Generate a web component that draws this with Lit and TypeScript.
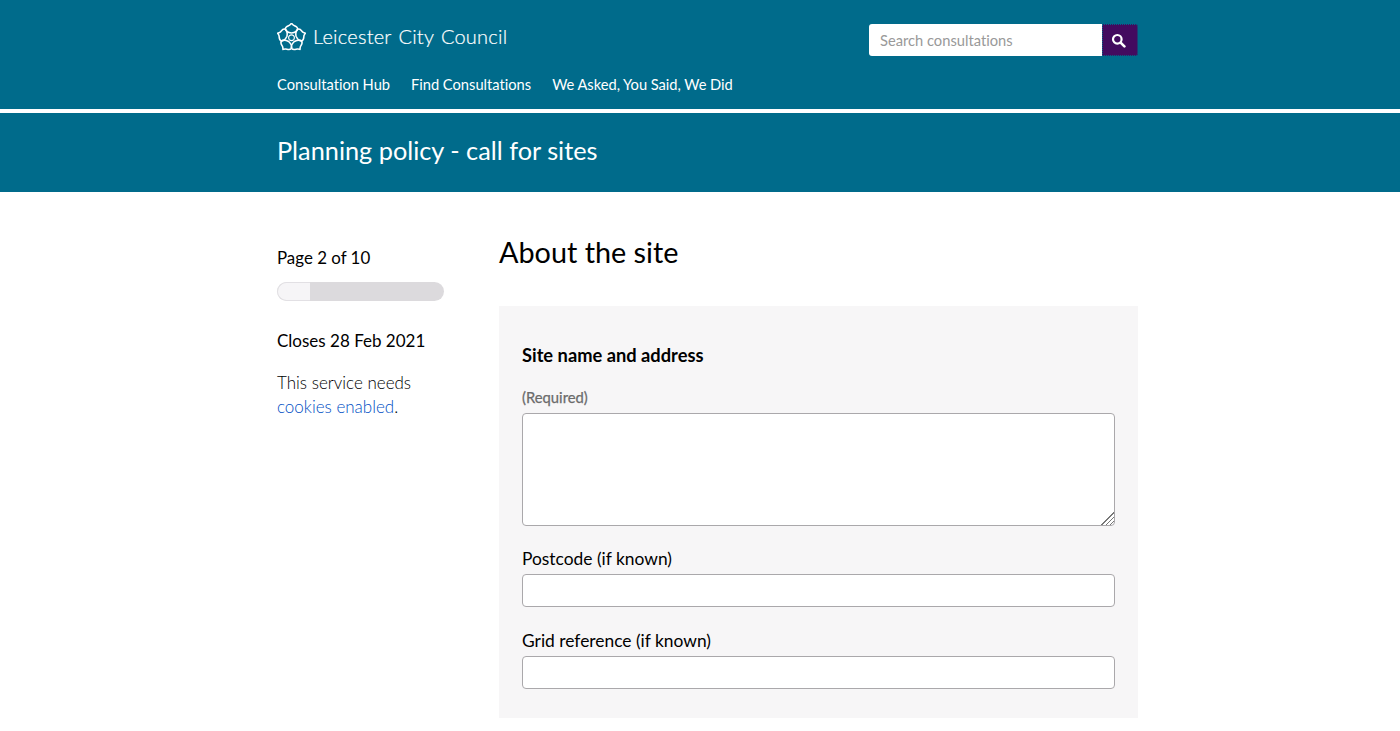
import {LitElement, html, css, svg} from 'lit';
import {customElement} from 'lit/decorators.js';

const petal = 'M0 -4.6 C-2 -4.9 -5.6 -5.6 -5.9 -8.6 C-5.9 -11 -2.8 -11.4 -1.8 -12.1 C-1.1 -12.6 -0.5 -13.4 0 -14 C0.5 -13.4 1.1 -12.6 1.8 -12.1 C2.8 -11.4 5.9 -11 5.9 -8.6 C5.6 -5.6 2 -4.9 0 -4.6 Z';

@customElement('app-root')
export class AppRoot extends LitElement {
  static styles = css`
    :host {
      display: block;
      font-family: Lato, 'Open Sans', sans-serif;
      font-variant-ligatures: none;
      color: #000;
      background: #fff;
      height: 731px;
      overflow: hidden;
    }

    .wrap {
      width: 861px;
      margin-left: 277px;
    }

    header {
      background: #006b8b;
      height: 109px;
      box-sizing: border-box;
      padding-top: 23px;
    }

    .top {
      display: flex;
      justify-content: space-between;
      align-items: flex-start;
    }

    .logo {
      display: flex;
      align-items: center;
      gap: 7px;
      color: #fff;
      font-size: 20px;
      font-weight: 300;
      letter-spacing: 0.24px;
      word-spacing: 1.5px;
      -webkit-text-stroke: 0.2px #fff;
      height: 29px;
    }

    .logo span {
      margin-top: -3px;
    }

    .logo svg {
      width: 29px;
      height: 29px;
      display: block;
    }

    .search {
      display: flex;
      margin-top: 1px;
      height: 32px;
    }

    .search input {
      width: 233px;
      box-sizing: border-box;
      border: 0;
      border-radius: 3px 0 0 3px;
      padding: 0 11px 1px;
      font: 400 14.7px Lato, sans-serif;
      font-variant-ligatures: none;
      background: #fff;
    }

    .search input::placeholder {
      color: #999;
      opacity: 1;
    }

    .search button {
      width: 36px;
      border: 0;
      padding: 0 3px 0 0;
      background: #430b5f;
      border-radius: 0 3px 3px 0;
      outline: 1px dotted #006b8b;
      outline-offset: -1px;
      display: flex;
      align-items: center;
      justify-content: center;
    }

    nav {
      display: flex;
      gap: 21px;
      margin-top: 19px;
    }

    nav a {
      color: #fff;
      font-size: 14.7px;
      line-height: 18px;
      word-spacing: -0.2px;
      text-decoration: none;
    }

    .banner {
      margin-top: 4px;
      background: #006b8b;
      height: 79px;
      display: flex;
      align-items: center;
    }

    .banner h1 {
      margin: 0;
      color: #fff;
      font-size: 25.3px;
      font-weight: 400;
      line-height: 72px;
      padding-bottom: 6px;
    }

    .content {
      display: grid;
      grid-template-columns: 167px 639px;
      column-gap: 55px;
    }

    .side {
      padding-top: 54px;
    }

    .side p {
      margin: 0;
      font-size: 17px;
      line-height: 24px;
    }

    .side .page {
      height: 24px;
      font-size: 16.9px;
    }

    .bar {
      height: 19px;
      margin-top: 12px;
      border-radius: 10px;
      background: #dcdadd;
      overflow: hidden;
    }

    .bar div {
      height: 100%;
      background: #f6f5f7;
      box-sizing: border-box;
      border-radius: 10px 0 0 10px;
      border: 1px solid #e2e0e4;
      border-right: 0;
    }

    .side .closes {
      margin-top: 28px;
    }

    .side .cookies {
      margin-top: 18px;
      font-weight: 300;
    }

    .cookies a {
      color: #004fc4;
      text-decoration: none;
    }

    main h2 {
      margin: 0;
      padding-top: 42px;
      font-size: 28.8px;
      font-weight: 400;
      line-height: 36px;
    }

    .panel {
      margin-top: 36px;
      height: 412px;
      box-sizing: border-box;
      padding: 38px 23px 0;
      background: #f7f6f7;
    }

    .panel h3 {
      margin: 0;
      font-size: 18.3px;
      font-weight: 700;
      line-height: 22px;
    }

    .hint {
      display: block;
      margin-top: 23px;
      font-size: 14.8px;
      line-height: 17px;
      color: #6b6b6b;
      font-weight: 400;
      -webkit-text-stroke: 0.25px #6b6b6b;
    }

    textarea,
    .field input {
      display: block;
      width: 100%;
      box-sizing: border-box;
      border: 1px solid #aaa8ab;
      border-radius: 4px;
      background: #fff;
      margin: 0;
      padding: 6px;
    }

    textarea {
      height: 113px;
      margin-top: 7px;
      resize: vertical;
    }

    textarea::-webkit-resizer {
      background:
        linear-gradient(135deg, #fff 50%, transparent 50%),
        repeating-linear-gradient(135deg, #777 0 1px, transparent 1px 3px);
    }

    .field {
      margin-top: 23px;
    }

    .field + .field {
      margin-top: 24px;
    }

    .field label {
      display: block;
      font-size: 17.4px;
      line-height: 19px;
      margin-bottom: 6px;
    }

    .field input {
      height: 33px;
    }
  `;

  render() {
    return html`
      <header>
        <div class="wrap">
          <div class="top">
            <div class="logo">
              <svg viewBox="-14 -14.2 28 28" fill="none" stroke="#fff" stroke-width="1.5" stroke-linejoin="round">
                ${[0, 72, 144, 216, 288].map(
                  (a) => svg`<path d=${petal} transform="rotate(${a})" />`
                )}
                <circle r="2.8" stroke-width="1.1" />
              </svg>
              <span>Leicester City Council</span>
            </div>
            <form class="search">
              <input placeholder="Search consultations" />
              <button type="button" aria-label="Search">
                <svg width="15" height="15" viewBox="0 0 15 15" fill="none" stroke="#fff">
                  <circle cx="6.3" cy="6.3" r="4.3" stroke-width="2.2" />
                  <path d="M9.6 9.6 L13.4 13.4" stroke-width="2.6" stroke-linecap="round" />
                </svg>
              </button>
            </form>
          </div>
          <nav>
            <a href="#">Consultation Hub</a>
            <a href="#">Find Consultations</a>
            <a href="#">We Asked, You Said, We Did</a>
          </nav>
        </div>
      </header>
      <div class="banner">
        <div class="wrap"><h1>Planning policy - call for sites</h1></div>
      </div>
      <div class="wrap content">
        <aside class="side">
          <p class="page">Page 2 of 10</p>
          <div class="bar"><div style="width: ${(2 / 10) * 100}%"></div></div>
          <p class="closes">Closes 28 Feb 2021</p>
          <p class="cookies">This service needs <a href="#">cookies enabled</a>.</p>
        </aside>
        <main>
          <h2>About the site</h2>
          <section class="panel">
            <h3>Site name and address</h3>
            <span class="hint">(Required)</span>
            <textarea></textarea>
            <div class="field">
              <label>Postcode (if known)</label>
              <input type="text" />
            </div>
            <div class="field">
              <label>Grid reference (if known)</label>
              <input type="text" />
            </div>
          </section>
        </main>
      </div>
    `;
  }
}
